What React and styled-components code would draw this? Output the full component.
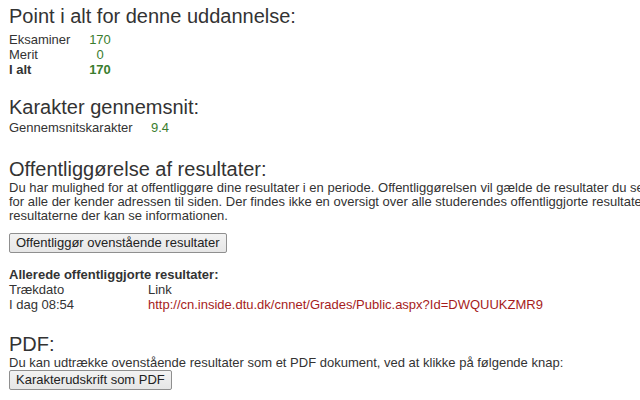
import React from 'react';
import styled, { createGlobalStyle } from 'styled-components';

const GlobalStyle = createGlobalStyle`
  html, body {
    margin: 0;
    padding: 0;
    background: #fff;
  }
  body {
    font-family: "Liberation Sans", Arial, sans-serif;
    color: #333;
    font-size: 13px;
  }
`;

const Page = styled.div`
  padding: 4px 9px 0;
  width: 622px;
  overflow: hidden;
`;

const Section = styled.section`
  margin-bottom: ${(p) => p.$gap || 0}px;
`;

const Heading = styled.h2`
  font-size: 20px;
  font-weight: normal;
  line-height: 24px;
  margin: 0;
  color: #333;
`;

const ScoreTable = styled.table`
  border-collapse: collapse;
  font-size: 13px;
  margin-top: ${(p) => p.$top || 0}px;

  td {
    padding: 0;
    height: 15px;
    line-height: 15px;
  }
`;

const Label = styled.td`
  width: ${(p) => p.$width}px;
  font-weight: ${(p) => (p.$bold ? 'bold' : 'normal')};
`;

const Value = styled.td`
  color: #3a7d2e;
  text-align: ${(p) => p.$align || 'center'};
  width: ${(p) => p.$width || 22}px;
  font-weight: ${(p) => (p.$bold ? 'bold' : 'normal')};
`;

const Text = styled.p`
  margin: 0;
  font-size: 13px;
  line-height: 14px;
  white-space: nowrap;
`;

const Button = styled.button`
  font-family: "Liberation Sans", Arial, sans-serif;
  font-size: 13px;
  color: #222;
  background: linear-gradient(#f2f2f2, #e6e6e6);
  border: 1px solid #8f8f8f;
  border-radius: 2px;
  padding: 2px 6px;
  height: 20px;
  line-height: 14px;
  margin: ${(p) => p.$margin || '0'};
`;

const Published = styled.div`
  margin-top: 15px;
`;

const SubTitle = styled.div`
  font-weight: bold;
  line-height: 14px;
`;

const LinkGrid = styled.div`
  display: grid;
  grid-template-columns: 139px auto;
  line-height: 15px;
`;

const ResultLink = styled.a`
  color: #a61c1c;
  text-decoration: none;
`;

export default function App() {
  return (
    <>
      <GlobalStyle />
      <Page>
        <Section $gap={18}>
          <Heading>Point i alt for denne uddannelse:</Heading>
          <ScoreTable $top={4}>
            <tbody>
              <tr>
                <Label $width={80}>Eksaminer</Label>
                <Value>170</Value>
              </tr>
              <tr>
                <Label $width={80}>Merit</Label>
                <Value>0</Value>
              </tr>
              <tr>
                <Label $width={80} $bold>I alt</Label>
                <Value $bold>170</Value>
              </tr>
            </tbody>
          </ScoreTable>
        </Section>

        <Section $gap={22}>
          <Heading>Karakter gennemsnit:</Heading>
          <ScoreTable $top={1}>
            <tbody>
              <tr>
                <Label $width={142}>Gennemsnitskarakter</Label>
                <Value $align="left" $width={30}>9.4</Value>
              </tr>
            </tbody>
          </ScoreTable>
        </Section>

        <Section $gap={20}>
          <Heading>Offentliggørelse af resultater:</Heading>
          <Text>
            Du har mulighed for at offentliggøre dine resultater i en periode. Offentliggørelsen vil gælde de resultater du ser på denne side, og de vil være synlige
            <br />
            for alle der kender adressen til siden. Der findes ikke en oversigt over alle studerendes offentliggjorte resultater, det er kun dem der kender adressen til
            <br />
            resultaterne der kan se informationen.
          </Text>
          <Button $margin="10px 0 0" type="button">Offentliggør ovenstående resultater</Button>
          <Published>
            <SubTitle>Allerede offentliggjorte resultater:</SubTitle>
            <LinkGrid>
              <span>Trækdato</span>
              <span>Link</span>
              <span>I dag 08:54</span>
              <ResultLink href="#">http://cn.inside.dtu.dk/cnnet/Grades/Public.aspx?Id=DWQUUKZMR9</ResultLink>
            </LinkGrid>
          </Published>
        </Section>

        <Section>
          <Heading>PDF:</Heading>
          <Text>Du kan udtrække ovenstående resultater som et PDF dokument, ved at klikke på følgende knap:</Text>
          <Button type="button">Karakterudskrift som PDF</Button>
        </Section>
      </Page>
    </>
  );
}
